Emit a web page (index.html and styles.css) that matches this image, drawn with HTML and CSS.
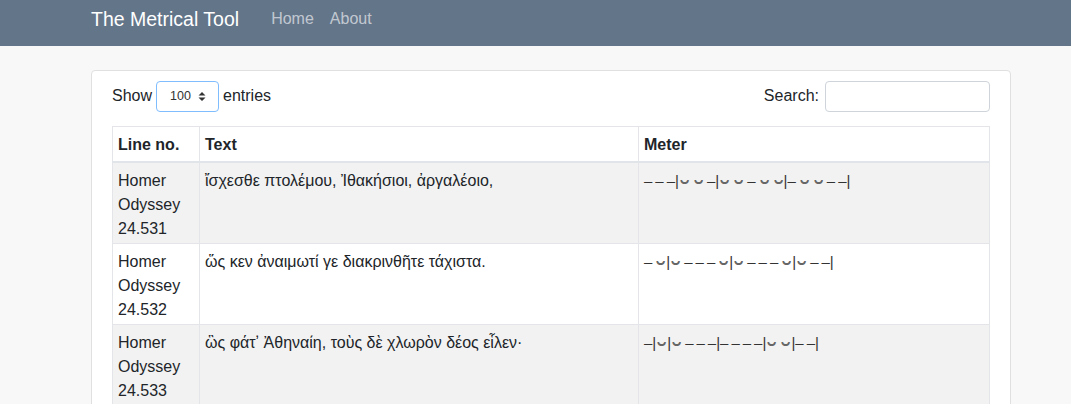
FILE: index.html
```html
<!DOCTYPE html>
<html>
<head>
<meta charset="utf-8">
<link rel="stylesheet" href="styles.css">
</head>
<body>
<nav class="navbar">
  <div class="nav-inner">
    <span class="brand">The Metrical Tool</span>
    <a class="nav-link">Home</a>
    <a class="nav-link">About</a>
  </div>
</nav>
<main class="main">
  <div class="card">
    <div class="controls">
      <label class="length">Show
        <span class="select">100
          <svg width="8" height="11" viewBox="0 0 8 11"><path d="M0.5 4.5 L4 1 L7.5 4.5 Z M0.5 6.5 L4 10 L7.5 6.5 Z" fill="#333"/></svg>
        </span>
        entries</label>
      <label class="search">Search: <span class="input"></span></label>
    </div>
    <table class="table">
      <thead>
        <tr><th class="c1">Line no.</th><th class="c2">Text</th><th class="c3">Meter</th></tr>
      </thead>
      <tbody>
        <tr class="odd"><td>Homer Odyssey 24.531</td><td>ἴσχεσθε πτολέμου, Ἰθακήσιοι, ἀργαλέοιο,</td><td class="meter">–&thinsp;–&thinsp;–|<span class="b">⏑</span>&thinsp;<span class="b">⏑</span>&thinsp;–|<span class="b">⏑</span>&thinsp;<span class="b">⏑</span>&thinsp;–&thinsp;<span class="b">⏑</span>&thinsp;<span class="b">⏑</span>|–&thinsp;<span class="b">⏑</span>&thinsp;<span class="b">⏑</span>&thinsp;–&thinsp;–|</td></tr>
        <tr><td>Homer Odyssey 24.532</td><td>ὥς κεν ἀναιμωτί γε διακρινθῆτε τάχιστα.</td><td class="meter">–&thinsp;<span class="b">⏑</span>|<span class="b">⏑</span>&thinsp;–&thinsp;–&thinsp;–&thinsp;<span class="b">⏑</span>|<span class="b">⏑</span>&thinsp;–&thinsp;–&thinsp;–&thinsp;<span class="b">⏑</span>|<span class="b">⏑</span>&thinsp;–&thinsp;–|</td></tr>
        <tr class="odd"><td>Homer Odyssey 24.533</td><td>ὣς φάτʼ Ἀθηναίη, τοὺς δὲ χλωρὸν δέος εἷλεν·</td><td class="meter">–|<span class="b">⏑</span>|<span class="b">⏑</span>&thinsp;–&thinsp;–&thinsp;–|–&thinsp;–&thinsp;–&thinsp;–|<span class="b">⏑</span>&thinsp;<span class="b">⏑</span>|–&thinsp;–|</td></tr>
      </tbody>
    </table>
  </div>
</main>
</body>
</html>
```

FILE: styles.css
```css
* { box-sizing: border-box; }
html, body { margin: 0; padding: 0; }
body {
  font-family: "Liberation Sans", Arial, sans-serif;
  font-size: 16px;
  line-height: 24px;
  color: #212529;
  background: #f8f8f8;
  height: 404px;
  overflow: hidden;
}
.navbar {
  background: #637589;
  height: 46px;
}
.nav-inner {
  display: flex;
  align-items: center;
  height: 37px;
  padding-left: 91px;
}
.brand {
  color: #fff;
  font-size: 19.5px;
  margin-right: 32px;
}
.nav-link {
  color: rgba(255,255,255,0.62);
  margin-right: 16px;
}
.main {
  padding: 24px 0 0 91px;
}
.card {
  width: 920px;
  height: 360px;
  background: #fff;
  border: 1px solid #e0e0e0;
  border-radius: 4px;
  padding: 10px 20px 0 20px;
}
.controls {
  display: flex;
  justify-content: space-between;
  align-items: center;
  height: 30px;
  margin-bottom: 15px;
}
.length, .search {
  display: flex;
  align-items: center;
}
.select {
  display: inline-flex;
  align-items: center;
  justify-content: space-between;
  width: 63px;
  height: 31px;
  margin: 0 4px 0 4px;
  padding: 0 12px 0 13px;
  border: 1px solid #80bdff;
  border-radius: 4px;
  font-size: 12.5px;
  color: #333;
}
.input {
  display: inline-block;
  width: 165px;
  height: 31px;
  margin-left: 6px;
  border: 1px solid #ced4da;
  border-radius: 4px;
}
.table {
  width: 878px;
  border-collapse: collapse;
  margin-left: 0;
}
.table th, .table td {
  border: 1px solid #e3e5e8;
  padding: 4px 5px;
  text-align: left;
  vertical-align: top;
}
.table thead th {
  font-weight: bold;
  border-bottom: 2px solid #e1e4e8;
  padding: 6px 5px 4px 5px;
}
.c1 { width: 87px; }
.c2 { width: 439px; }
.table tbody td { padding: 6px 5px 2px 5px; }
.table tbody tr.odd { background: #f2f2f2; }
.table tbody td:first-child { height: 81px; }
.meter {
  font-family: "Liberation Sans", sans-serif;
  font-size: 15px;
  color: #333;
  white-space: nowrap;
}
.b {
  display: inline-block;
  width: 11px;
  text-align: center;
  font-family: "DejaVu Sans", sans-serif;
  font-size: 28px;
  line-height: 16px;
  vertical-align: -6px;
  color: #666;
}
```
